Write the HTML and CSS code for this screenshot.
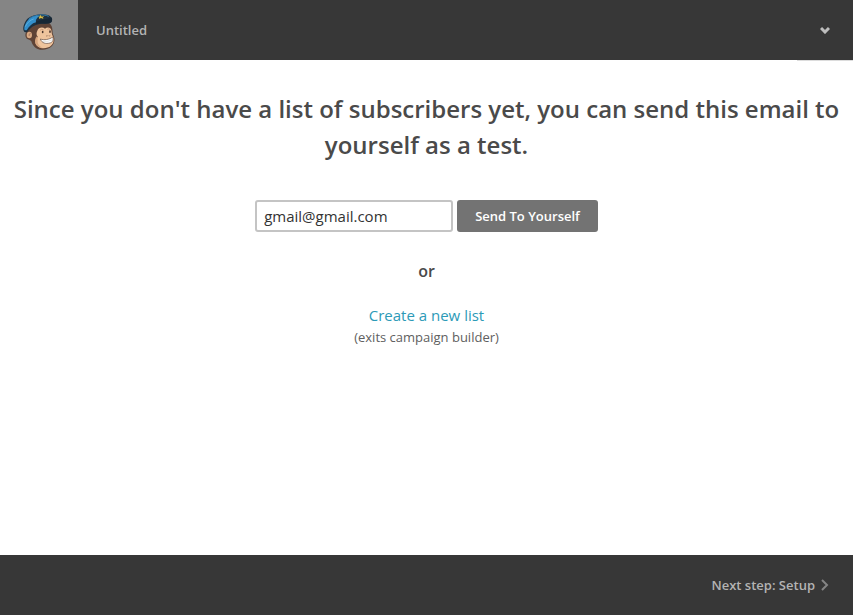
FILE: index.html
```html
<!DOCTYPE html>
<html lang="en">
<head>
<meta charset="utf-8">
<meta name="viewport" content="width=device-width, initial-scale=1">
<title>Untitled</title>
<link rel="stylesheet" href="styles.css">
</head>
<body>
<header class="topbar">
  <a class="brand" href="#" aria-label="Home">
    <svg class="brand-logo" viewBox="66 36 102 120" aria-hidden="true">
      <ellipse cx="88" cy="105" rx="12" ry="14" fill="#5f4336"/>
      <path d="M82 88C90 68 112 61 134 64C148 66 157 76 157 88C158 96 157 101 161 108C165 118 164 129 156 138C147 147 133 151 120 149C108 147 98 138 94 124C84 118 79 102 82 88Z" fill="#5f4336"/>
      <ellipse cx="88" cy="105" rx="8" ry="10" fill="#d9a982"/>
      <path d="M92 101C88 100 86 104 88 108" fill="none" stroke="#8b6250" stroke-width="2"/>
      <path d="M112 92C115 82 128 80 135 86C142 79 153 82 154 91C155 98 155 102 158 108C164 118 161 131 152 138C142 146 122 148 111 137C103 129 105 117 114 110C108 105 109 98 112 92Z" fill="#efc49d"/>
      <path d="M112 108C104 113 103 128 110 136C115 142 122 144 128 144C116 138 112 130 113 121Z" fill="#d6a47d"/>
      <path d="M120 91Q125 85 131 90M142 88Q147 84 151 89" fill="none" stroke="#b9866a" stroke-width="2"/>
      <ellipse cx="128" cy="96" rx="2.5" ry="4" fill="#49342c"/>
      <ellipse cx="150" cy="95" rx="2.5" ry="4" fill="#49342c"/>
      <path d="M138 107Q141 110 143 107M146 107Q149 109 151 106" fill="none" stroke="#866050" stroke-width="2"/>
      <path d="M121 117C132 121 148 119 158 111C162 121 157 127 150 129C137 132 126 130 121 117Z" fill="#fff" stroke="#60473b" stroke-width="2"/>
      <path d="M128 124Q144 126 158 119" fill="none" stroke="#aaa39b" stroke-width="1"/>
      <path d="M82 96C92 82 103 75 119 72C132 70 144 73 155 66C158 56 153 48 144 45C126 40 99 43 84 55C74 65 67 82 71 92C73 97 78 98 82 96Z" fill="#1d3040"/>
      <path d="M74 91C70 83 78 65 87 57C97 49 108 46 119 47C109 54 106 61 108 67C96 70 87 79 80 91Z" fill="#348fcb"/>
      <path d="M76 80C81 69 90 60 101 57" fill="none" stroke="#59afdd" stroke-width="3"/>
      <path d="M86 57C99 45 130 41 146 49" fill="none" stroke="#317eaf" stroke-width="3"/>
      <path d="M108 65C123 59 139 59 154 52C159 58 156 67 149 70C136 73 123 69 108 72Z" fill="#172735"/>
      <path d="M112 48L117 51L122 45L125 50L133 48L128 53L131 57L123 54L117 57L118 53Z" fill="#d9bd46"/>
    </svg>
  </a>
  <span class="campaign-name">Untitled</span>
  <button class="menu-toggle" type="button" aria-label="Campaign menu">
    <svg class="chevron-down" viewBox="0 0 10 8" aria-hidden="true"><path d="M1 2L5 6L9 2" fill="none" stroke="currentColor" stroke-width="3"/></svg>
  </button>
</header>
<main class="content">
  <h1 class="headline">Since you don't have a list of subscribers yet, you can send this email to yourself as a test.</h1>
  <form class="test-form">
    <input class="email-field" type="email" aria-label="Email address" value="gmail@gmail.com">
    <button class="send-button" type="button">Send To Yourself</button>
  </form>
  <p class="separator">or</p>
  <a class="create-link" href="#">Create a new list</a>
  <p class="note">(exits campaign builder)</p>
</main>
<footer class="bottombar">
  <a class="next-step" href="#">Next step: Setup
    <svg class="chevron-right" viewBox="0 0 8 12" aria-hidden="true"><path d="M1 1L6 6L1 11" fill="none" stroke="currentColor" stroke-width="2"/></svg>
  </a>
</footer>
</body>
</html>
```
FILE: styles.css
```css
* {
  box-sizing: border-box;
}

body {
  margin: 0;
  min-height: 100vh;
  display: flex;
  flex-direction: column;
  background: #fff;
  color: #4a4a4a;
  font-family: "Open Sans", sans-serif;
}

.topbar {
  position: relative;
  display: flex;
  align-items: center;
  height: 60px;
  background: #373737;
}

.topbar::after {
  content: "";
  position: absolute;
  top: 100%;
  right: 0;
  width: 56px;
  height: 1px;
  background: #dcdcdc;
}

.brand {
  display: flex;
  align-items: center;
  justify-content: center;
  align-self: stretch;
  width: 78px;
  padding-top: 4px;
  background: #858585;
}

.brand-logo {
  width: 34px;
  height: 40px;
}

.campaign-name {
  margin-left: 18px;
  color: #b3b3b3;
  font-size: 13px;
  font-weight: 600;
}

.menu-toggle {
  display: flex;
  margin-left: auto;
  margin-right: 15px;
  padding: 8px;
  border: 0;
  background: none;
  color: #bdbdbd;
}

.chevron-down {
  width: 10px;
  height: 8px;
}

.content {
  flex: 1;
  display: flex;
  flex-direction: column;
  align-items: center;
  padding: 31px 8px 24px;
  text-align: center;
}

.headline {
  margin: 0;
  font-size: 24px;
  line-height: 36px;
  font-weight: 600;
}

.test-form {
  display: flex;
  gap: 4px;
  margin-top: 37px;
}

.email-field {
  width: 198px;
  height: 32px;
  padding: 0 7px;
  border: 2px solid #c4c4c4;
  border-radius: 3px;
  background: #fff;
  color: #333;
  font: 15px "Open Sans", sans-serif;
}

.send-button {
  height: 32px;
  padding: 0 18px;
  border: 0;
  border-radius: 3px;
  background: #737373;
  color: #fff;
  font: 600 13px "Open Sans", sans-serif;
}

.separator {
  margin: 28px 0 0;
  font-size: 16px;
  line-height: 22px;
  font-weight: 600;
}

.create-link {
  margin-top: 22px;
  color: #2c9ab7;
  font-size: 15px;
  line-height: 22px;
  text-decoration: none;
}

.note {
  margin: 0;
  color: #606060;
  font-size: 13px;
  line-height: 22px;
}

.bottombar {
  display: flex;
  align-items: center;
  justify-content: flex-end;
  height: 60px;
  padding: 0 24px;
  background: #373737;
}

.next-step {
  display: flex;
  align-items: center;
  gap: 6px;
  color: #b3b3b3;
  font-size: 13px;
  font-weight: 600;
  text-decoration: none;
}

.chevron-right {
  width: 8px;
  height: 12px;
  color: #858585;
}
```
